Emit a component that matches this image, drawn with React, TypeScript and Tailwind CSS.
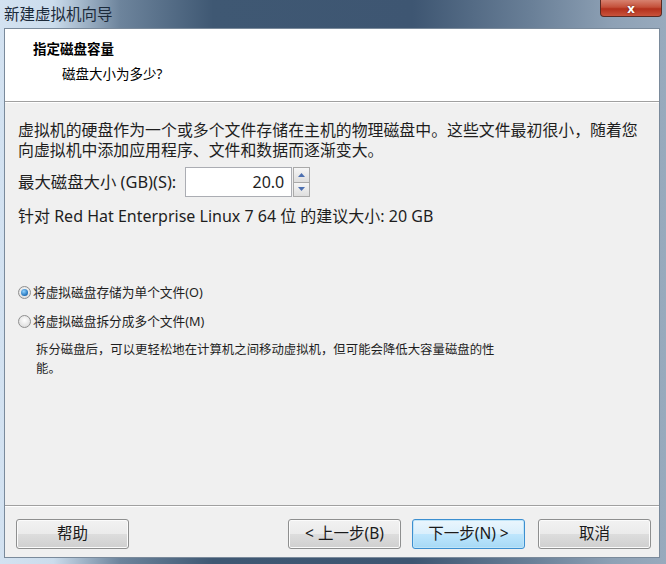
import React from "react";

const font = "font-['Noto_Sans','Noto_Sans_CJK_SC',sans-serif]";

const WinButton = ({ label, primary = false }: { label: React.ReactNode; primary?: boolean }) => (
  <div
    className={`w-[113px] h-[30px] rounded-[3px] border flex items-center justify-center text-[15.5px] text-[#1a1a1a] ${
      primary
        ? "border-[#3c8fd0] bg-[linear-gradient(to_bottom,#eaf6fd_0%,#d9effc_50%,#bee6fd_51%,#a7d9f5_100%)] shadow-[inset_0_0_0_1px_#bfe4f8]"
        : "border-[#8e8f8f] bg-[linear-gradient(to_bottom,#f2f2f2_0%,#ebebeb_50%,#dddddd_51%,#cfcfcf_100%)] shadow-[inset_0_0_0_1px_#fbfbfb]"
    }`}
  >
    {label}
  </div>
);

const Radio = ({ checked }: { checked: boolean }) => (
  <span className="w-[13px] h-[13px] rounded-full border border-[#8f8f8f] bg-[radial-gradient(circle_at_50%_40%,#ffffff,#d4d4d4)] flex items-center justify-center shrink-0">
    {checked && (
      <span className="w-[7px] h-[7px] rounded-full bg-[radial-gradient(circle_at_40%_35%,#8fd2ff,#1f6fb8_70%,#0c4c8c)]" />
    )}
  </span>
);

export default function App() {
  return (
    <div
      className={`w-[666px] h-[564px] flex flex-col overflow-hidden ${font} bg-[linear-gradient(to_right,#d3e2f1_0%,#cbdcec_8%,#6d849c_18%,#3f5873_32%,#3e5672_62%,#6a8098_80%,#8ea1b5_92%,#98aabd_100%)]`}
    >
      {/* title bar */}
      <div className="h-[28px] shrink-0 flex items-start justify-between">
        <div className="pl-[4px] pt-[4px] text-[15.5px] leading-[20px] text-[#1b2a3a]">新建虚拟机向导</div>
        <div className="mr-[4px] w-[62px] h-[17px] rounded-b-[4px] border border-t-0 border-[#5a2a22] bg-[linear-gradient(to_bottom,#d7816f_0%,#c4503a_45%,#b3301c_55%,#c9533b_100%)] flex items-center justify-center">
          <span className="text-white font-bold text-[13px] leading-[13px] [text-shadow:0_0_2px_#5a1a10]">x</span>
        </div>
      </div>

      {/* client area */}
      <div className="flex-1 ml-[4px] mr-[6px] mb-[6px] flex flex-col border border-[#7a8a9b] bg-[#f0f0f0]">
        {/* header */}
        <div className="h-[73px] shrink-0 bg-white border-b border-[#a0a0a0] pl-[28px] pt-[10px]">
          <div className="font-bold text-[13.5px] leading-[20px] text-black">指定磁盘容量</div>
          <div className="pl-[29px] pt-[5px] text-[13.5px] leading-[20px] text-black">磁盘大小为多少?</div>
        </div>
        <div className="h-px bg-white" />

        {/* body */}
        <div className="flex-1 px-[13px] pt-[17px] text-[#1e1e1e]">
          <p className="text-[15.9px] leading-[20px] whitespace-nowrap">
            虚拟机的硬盘作为一个或多个文件存储在主机的物理磁盘中。这些文件最初很小，随着您
            <br />
            向虚拟机中添加应用程序、文件和数据而逐渐变大。
          </p>

          <div className="mt-[7px] flex items-center">
            <span className="text-[16.4px]">最大磁盘大小 (GB)(S):</span>
            <div className="ml-[9px] w-[107px] h-[30px] border border-[#abadb3] bg-white flex items-center justify-end pr-[7px] text-[16px]">
              20.0
            </div>
            <div className="ml-px w-[17px] h-[30px] flex flex-col">
              <div className="flex-1 border border-[#a9a9a9] bg-[linear-gradient(to_bottom,#f6f6f6,#dedede)] flex items-center justify-center">
                <svg width="7" height="4" viewBox="0 0 7 4">
                  <path d="M0 4 L3.5 0 L7 4 Z" fill="#4c6fb0" />
                </svg>
              </div>
              <div className="flex-1 border border-t-0 border-[#a9a9a9] bg-[linear-gradient(to_bottom,#f6f6f6,#dedede)] flex items-center justify-center">
                <svg width="7" height="4" viewBox="0 0 7 4">
                  <path d="M0 0 L3.5 4 L7 0 Z" fill="#4c6fb0" />
                </svg>
              </div>
            </div>
          </div>

          <div className="mt-[8px] text-[16px] leading-[22px]">
            针对 Red Hat Enterprise Linux 7 64 位 的建议大小: 20 GB
          </div>

          <div className="mt-[55px] flex items-center gap-[2px] text-[12.7px] leading-[20px]">
            <Radio checked />
            <span>将虚拟磁盘存储为单个文件(O)</span>
          </div>
          <div className="mt-[9px] flex items-center gap-[2px] text-[12.7px] leading-[20px]">
            <Radio checked={false} />
            <span>将虚拟磁盘拆分成多个文件(M)</span>
          </div>
          <p className="mt-[9px] pl-[18px] text-[12.4px] leading-[19px]">
            拆分磁盘后，可以更轻松地在计算机之间移动虚拟机，但可能会降低大容量磁盘的性
            <br />
            能。
          </p>
        </div>

        {/* footer */}
        <div className="h-[52px] shrink-0 border-t border-[#a0a0a0] shadow-[inset_0_1px_0_#ffffff] flex items-start pt-[13px] pl-[11px] pr-[8px]">
          <WinButton label="帮助" />
          <div className="flex-1" />
          <WinButton label="< 上一步(B)" />
          <div className="w-[11px]" />
          <WinButton label="下一步(N) >" primary />
          <div className="w-[13px]" />
          <WinButton label="取消" />
        </div>
      </div>
    </div>
  );
}
